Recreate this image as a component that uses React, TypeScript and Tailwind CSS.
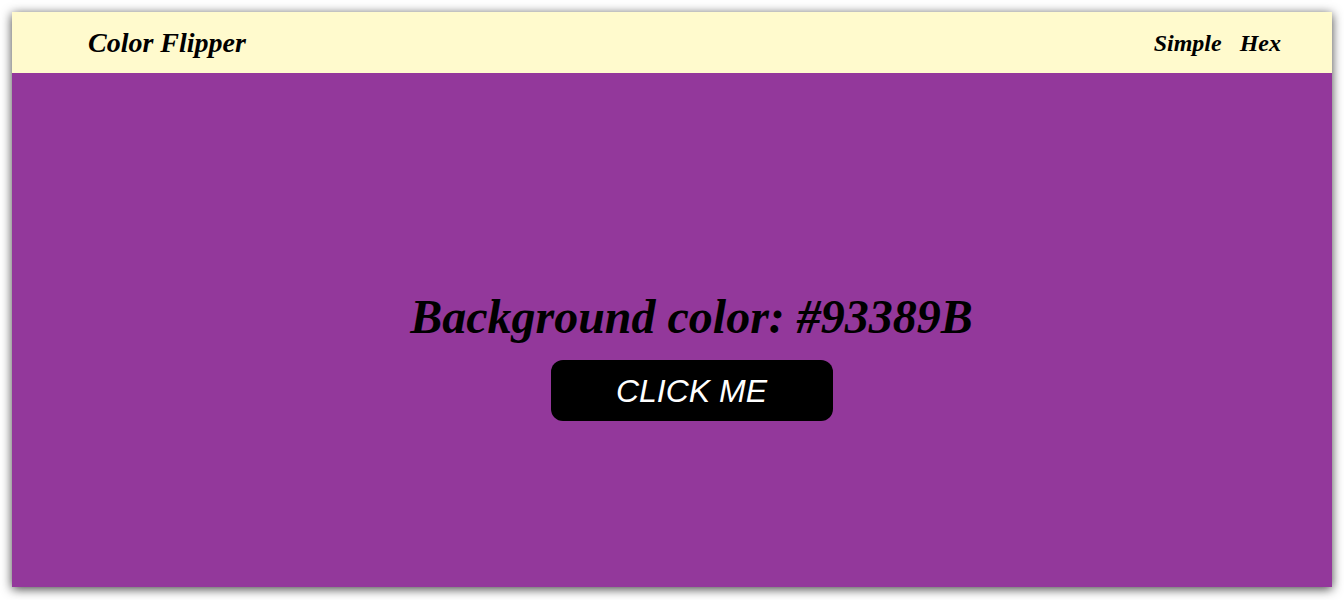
const App = () => {
  return (
    <div className="min-h-screen bg-white p-3">
      <div className="flex h-[575px] flex-col bg-[#93389B] shadow-[0_2px_10px_rgba(0,0,0,0.75)]">
        {/* Navbar */}
        <nav className="flex h-[61px] items-center justify-between bg-[#FFFACD] pl-[76px] pr-[51px] font-['Liberation_Serif',serif] font-bold italic text-black">
          <h2 className="text-[28px] leading-none">Color Flipper</h2>
          <ul className="flex gap-[18px] text-[24px] leading-none">
            <li>
              <a href="#">Simple</a>
            </li>
            <li>
              <a href="#">Hex</a>
            </li>
          </ul>
        </nav>

        {/* Main */}
        <main className="flex flex-1 flex-col items-center pl-[39px] pt-[216px]">
          <h1 className="font-['Liberation_Serif',serif] text-5xl font-bold italic leading-[56px] text-black">
            Background color: #93389B
          </h1>
          <button className="mt-[15px] flex h-[61px] w-[282px] items-center justify-center rounded-xl bg-black font-['Liberation_Sans',sans-serif] text-[32px] italic leading-none text-white">
            CLICK ME
          </button>
        </main>
      </div>
    </div>
  );
};

export default App;
